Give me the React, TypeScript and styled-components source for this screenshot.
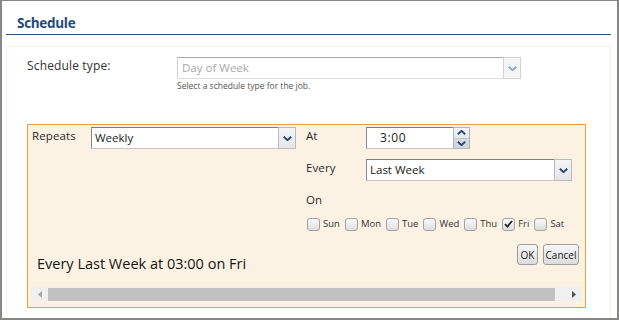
import React from "react";
import styled, { createGlobalStyle, css } from "styled-components";

const Global = createGlobalStyle`
  html, body { margin: 0; padding: 0; background: #fff; }
  body { font-family: "Open Sans", "Noto Sans", sans-serif; color: #333; }
  * { box-sizing: border-box; }
`;

const Frame = styled.div`
  width: 619px;
  height: 320px;
  border-style: solid;
  border-color: #878787;
  border-width: 1px 2px 2px 2px;
  background: #fff;
  overflow: hidden;
  padding: 0 6px 0 4px;
  display: flex;
  flex-direction: column;
`;

const Header = styled.div`
  height: 34px;
  border-bottom: 1px solid #2b5284;
  padding: 13px 0 0 11px;
`;

const Title = styled.h1`
  margin: 0;
  font-size: 13.5px;
  line-height: 18px;
  font-weight: 700;
  letter-spacing: -0.3px;
  color: #1f4a80;
`;

const Panel = styled.div`
  margin-top: 11px;
  flex: 1;
  border: 1px solid #fdf0e2;
  border-bottom: none;
  padding: 10px 0 0 20px;
`;

const FieldRow = styled.div`
  display: flex;
  align-items: flex-start;
`;

const FieldLabel = styled.div`
  width: 150px;
  font-size: 12px;
  line-height: 16px;
  padding-top: 1px;
  color: #333;
  letter-spacing: 0.15px;
`;

const FieldControl = styled.div`
  display: flex;
  flex-direction: column;
`;

const Hint = styled.div`
  margin-top: 1px;
  font-size: 8.5px;
  line-height: 11px;
  color: #555;
`;

const SelectBox = styled.div<{ $w: number; $disabled?: boolean }>`
  width: ${(p) => p.$w}px;
  height: 22px;
  display: flex;
  background: #fff;
  border: 1px solid;
  ${(p) =>
    p.$disabled
      ? css`
          border-color: #a9a9a9 #d6d6d6 #dcdcdc #d0d0d0;
        `
      : css`
          border-color: #7c7c7c #c4c4cc #c4c4cc #8a8a8a;
        `}
`;

const SelectText = styled.div<{ $disabled?: boolean }>`
  flex: 1;
  font-size: 11.5px;
  line-height: 20px;
  padding-left: ${(p) => (p.$disabled ? 4 : 3)}px;
  color: ${(p) => (p.$disabled ? "#a8a8a8" : "#1a1a1a")};
  white-space: nowrap;
  overflow: hidden;
`;

const SelectButton = styled.div<{ $disabled?: boolean }>`
  width: 18px;
  margin: -1px -1px -1px 0;
  display: flex;
  align-items: center;
  justify-content: center;
  border: 1px solid ${(p) => (p.$disabled ? "#d2d2d6" : "#b9b9c6")};
  background: ${(p) =>
    p.$disabled ? "#f4f4f6" : "linear-gradient(#f5f5f5, #e6e6e8)"};
`;

const Chevron = ({ color, up }: { color: string; up?: boolean }) => (
  <svg width="9" height="5" viewBox="0 0 9 5" style={{ display: "block" }}>
    <path
      d={up ? "M0.8 4.3 L4.5 0.9 L8.2 4.3" : "M0.8 0.7 L4.5 4.1 L8.2 0.7"}
      fill="none"
      stroke={color}
      strokeWidth="1.9"
    />
  </svg>
);

const Select = ({
  value,
  width,
  disabled,
}: {
  value: string;
  width: number;
  disabled?: boolean;
}) => (
  <SelectBox $w={width} $disabled={disabled}>
    <SelectText $disabled={disabled}>{value}</SelectText>
    <SelectButton $disabled={disabled}>
      <Chevron color={disabled ? "#97a5bf" : "#26457a"} />
    </SelectButton>
  </SelectBox>
);

const RecurrenceBox = styled.div`
  margin-top: 33px;
  width: 559px;
  height: 184px;
  border: 1px solid #e8a23a;
  background: #fcf2e3;
  padding-top: 2px;
  display: flex;
  flex-direction: column;
`;

const Columns = styled.div`
  display: flex;
  align-items: stretch;
`;

const LeftCol = styled.div`
  width: 268px;
  flex: none;
  padding-left: 4px;
  display: flex;
  flex-direction: column;
  justify-content: space-between;
`;

const RightCol = styled.div`
  margin-left: 10px;
  flex: 1;
  min-width: 0;
  padding: 0 6px 7px 0;
  display: flex;
  flex-direction: column;
`;

const Row = styled.div<{ $mt?: number }>`
  display: flex;
  align-items: flex-start;
  margin-top: ${(p) => p.$mt ?? 0}px;
`;

const RowLabel = styled.div<{ $w: number }>`
  width: ${(p) => p.$w}px;
  font-size: 11.5px;
  line-height: 16px;
  padding-top: 1px;
  color: #2a2a2a;
  letter-spacing: 0.1px;
`;

const TimeBox = styled.div`
  width: 104px;
  height: 22px;
  display: flex;
  background: #fff;
  border: 1px solid;
  border-color: #7c7c7c #c4c4cc #c4c4cc #8a8a8a;
`;

const TimeText = styled.div`
  flex: 1;
  font-size: 12px;
  line-height: 20px;
  padding-left: 13px;
  letter-spacing: 0.6px;
  color: #1a1a1a;
`;

const Spinner = styled.div`
  width: 17px;
  margin: -1px -1px -1px 0;
  border: 1px solid #b0b4bc;
  display: flex;
  flex-direction: column;
`;

const SpinHalf = styled.div<{ $down?: boolean }>`
  flex: 1;
  display: flex;
  align-items: center;
  justify-content: center;
  background: ${(p) =>
    p.$down ? "linear-gradient(#d9dde2, #cfd4da)" : "linear-gradient(#f3f5f8, #e4e8ee)"};
  border-top: ${(p) => (p.$down ? "1px solid #c3c7cd" : "none")};
`;

const DayList = styled.div`
  display: flex;
  align-items: center;
  height: 14px;
  margin-top: 9px;
  padding-left: 1px;
`;

const DayItem = styled.label`
  display: flex;
  align-items: center;
  margin-right: 5px;
`;

const CheckBox = styled.span`
  width: 13px;
  height: 13px;
  border: 1px solid #a3a3a3;
  border-radius: 3px;
  background: linear-gradient(#fafafa, #dddddd);
  display: flex;
  align-items: center;
  justify-content: center;
`;

const DayLabel = styled.span`
  margin-left: 3px;
  font-size: 9.5px;
  line-height: 14px;
  color: #333;
`;

const ButtonRow = styled.div`
  display: flex;
  justify-content: flex-end;
  gap: 5px;
  margin-top: 13px;
`;

const Button = styled.button<{ $w: number }>`
  width: ${(p) => p.$w}px;
  height: 21px;
  padding: 0;
  border: 1px solid #9c9c9c;
  border-radius: 3px;
  background: linear-gradient(#f7f7f7, #dcdcdc);
  font-family: "Open Sans", "Noto Sans", sans-serif;
  font-size: 10px;
  color: #222;
`;

const Summary = styled.div`
  padding-left: 5px;
  margin-bottom: -1px;
  font-size: 14.5px;
  line-height: 18px;
  color: #151515;
`;

const Scrollbar = styled.div`
  margin: 15px 3px 0 3px;
  height: 14px;
  background: #f0f0f0;
  display: flex;
  align-items: center;
`;

const ScrollArrow = styled.div<{ $w: number }>`
  width: ${(p) => p.$w}px;
  height: 14px;
  display: flex;
  align-items: center;
  justify-content: center;
`;

const ScrollThumb = styled.div`
  width: 507px;
  height: 13px;
  background: #c1c1c1;
`;

const Spacer = styled.div`
  flex: 1;
`;

const days = ["Sun", "Mon", "Tue", "Wed", "Thu", "Fri", "Sat"];

export default function App() {
  return (
    <>
      <Global />
      <Frame>
        <Header>
          <Title>Schedule</Title>
        </Header>
        <Panel>
          <FieldRow>
            <FieldLabel>Schedule type:</FieldLabel>
            <FieldControl>
              <Select value="Day of Week" width={344} disabled />
              <Hint>Select a schedule type for the job.</Hint>
            </FieldControl>
          </FieldRow>
          <RecurrenceBox>
            <Columns>
              <LeftCol>
                <Row>
                  <RowLabel $w={59}>Repeats</RowLabel>
                  <Select value="Weekly" width={205} />
                </Row>
                <Summary>Every Last Week at 03:00 on Fri</Summary>
              </LeftCol>
              <RightCol>
                <Row>
                  <RowLabel $w={60}>At</RowLabel>
                  <TimeBox>
                    <TimeText>3:00</TimeText>
                    <Spinner>
                      <SpinHalf>
                        <Chevron color="#26457a" up />
                      </SpinHalf>
                      <SpinHalf $down>
                        <Chevron color="#26457a" />
                      </SpinHalf>
                    </Spinner>
                  </TimeBox>
                </Row>
                <Row $mt={10}>
                  <RowLabel $w={60}>Every</RowLabel>
                  <Select value="Last Week" width={206} />
                </Row>
                <Row $mt={10}>
                  <RowLabel $w={60}>On</RowLabel>
                </Row>
                <DayList>
                  {days.map((d) => (
                    <DayItem key={d}>
                      <CheckBox>
                        {d === "Fri" && (
                          <svg width="9" height="8" viewBox="0 0 9 8">
                            <path
                              d="M1 4.2 L3.4 6.6 L8 1"
                              fill="none"
                              stroke="#2a2a2a"
                              strokeWidth="1.9"
                            />
                          </svg>
                        )}
                      </CheckBox>
                      <DayLabel>{d}</DayLabel>
                    </DayItem>
                  ))}
                </DayList>
                <ButtonRow>
                  <Button $w={21}>OK</Button>
                  <Button $w={36}>Cancel</Button>
                </ButtonRow>
              </RightCol>
            </Columns>
            <Scrollbar>
              <ScrollArrow $w={17}>
                <svg width="4" height="7" viewBox="0 0 4 7">
                  <path d="M4 0 L0 3.5 L4 7 Z" fill="#a6a6a6" />
                </svg>
              </ScrollArrow>
              <ScrollThumb />
              <Spacer />
              <ScrollArrow $w={17}>
                <svg width="4" height="7" viewBox="0 0 4 7">
                  <path d="M0 0 L4 3.5 L0 7 Z" fill="#505050" />
                </svg>
              </ScrollArrow>
            </Scrollbar>
          </RecurrenceBox>
        </Panel>
      </Frame>
    </>
  );
}
